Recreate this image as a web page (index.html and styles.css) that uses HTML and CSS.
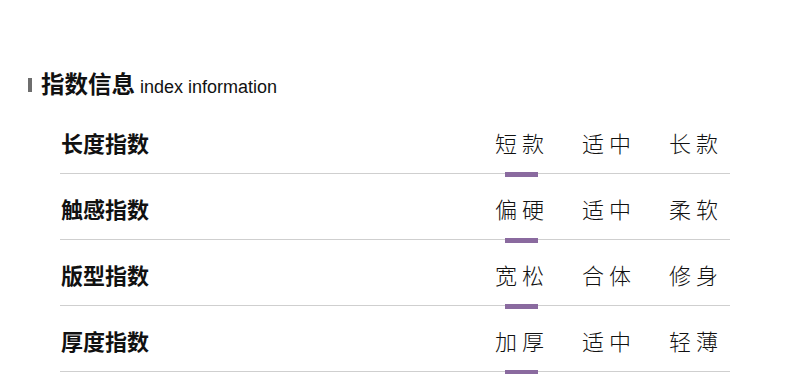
FILE: index.html
```html
<!DOCTYPE html>
<html lang="zh">
<head>
<meta charset="utf-8">
<link rel="stylesheet" href="styles.css">
</head>
<body>
<section class="index">
  <h2 class="title"><span class="mark"></span><span class="cn">指数信息</span><span class="en">index information</span></h2>
  <div class="rows">
    <div class="row">
      <div class="label">长度指数</div>
      <div class="opts"><span class="opt on">短款</span><span class="opt">适中</span><span class="opt">长款</span></div>
    </div>
    <div class="row">
      <div class="label">触感指数</div>
      <div class="opts"><span class="opt on">偏硬</span><span class="opt">适中</span><span class="opt">柔软</span></div>
    </div>
    <div class="row">
      <div class="label">版型指数</div>
      <div class="opts"><span class="opt on">宽松</span><span class="opt">合体</span><span class="opt">修身</span></div>
    </div>
    <div class="row">
      <div class="label">厚度指数</div>
      <div class="opts"><span class="opt on">加厚</span><span class="opt">适中</span><span class="opt">轻薄</span></div>
    </div>
  </div>
</section>
</body>
</html>
```
FILE: styles.css
```css
html, body {
  margin: 0;
  padding: 0;
  background: #fff;
}
body {
  width: 790px;
  height: 374px;
  overflow: hidden;
  font-family: "Noto Sans CJK SC", "Noto Sans", sans-serif;
  color: #111;
}
.index {
  padding: 68px 0 0 28px;
}
.title {
  margin: 0;
  display: flex;
  align-items: baseline;
  height: 40px;
  font-weight: normal;
}
.mark {
  width: 4px;
  height: 14px;
  background: #6e6e6e;
  margin-right: 9px;
  margin-top: 10px;
  align-self: flex-start;
}
.cn {
  font-size: 23.5px;
  font-weight: 700;
  line-height: 31px;
  color: #111;
}
.en {
  font-family: "Liberation Sans", sans-serif;
  font-size: 18px;
  margin-left: 5px;
  color: #111;
}
.rows {
  margin-left: 32px;
  width: 670px;
}
.row {
  display: flex;
  align-items: center;
  justify-content: space-between;
  height: 62px;
  padding-top: 3px;
  border-bottom: 1px solid #cfcfcf;
}
.label {
  font-size: 22px;
  font-weight: 700;
  padding-left: 1px;
  line-height: 30px;
}
.opts {
  display: flex;
  gap: 33px;
  padding-right: 7px;
}
.opt {
  position: relative;
  font-size: 22px;
  font-weight: 300;
  letter-spacing: 5px;
  line-height: 30px;
  width: 54px;
  color: #111;
}
.opt.on::after {
  content: "";
  position: absolute;
  left: 10px;
  width: 33px;
  height: 5px;
  bottom: -20px;
  background: #8a6a9f;
}
```
